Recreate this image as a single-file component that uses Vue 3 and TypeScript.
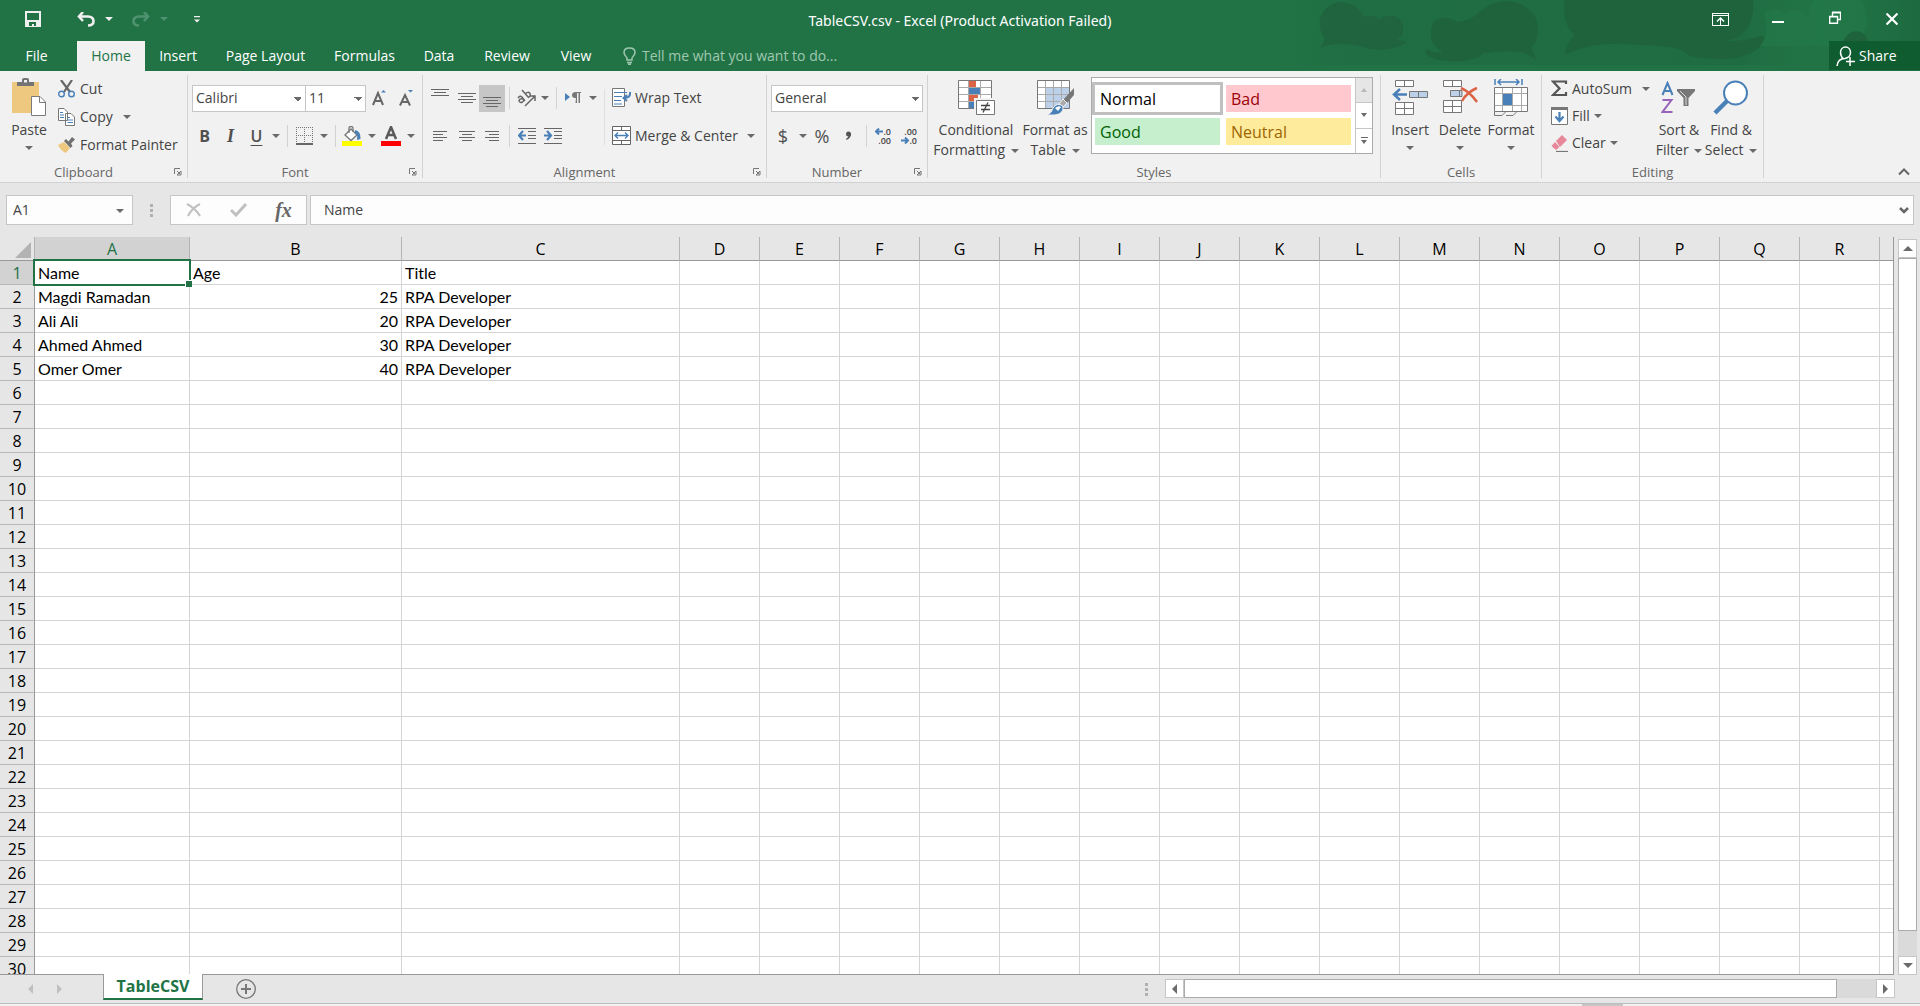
<script setup lang="ts">
import { ref } from 'vue'

interface Person {
  name: string
  age: string
  title: string
}

const tabs: { label: string; width: string }[] = [
  { label: 'Insert', width: 'w66' },
  { label: 'Page Layout', width: 'w109' },
  { label: 'Formulas', width: 'w89' },
  { label: 'Data', width: 'w60' },
  { label: 'Review', width: 'w76' },
  { label: 'View', width: 'w62' },
]

const columns: string[] = 'ABCDEFGHIJKLMNOPQR'.split('')

const people: Person[] = [
  { name: 'Name', age: 'Age', title: 'Title' },
  { name: 'Magdi Ramadan', age: '25', title: 'RPA Developer' },
  { name: 'Ali Ali', age: '20', title: 'RPA Developer' },
  { name: 'Ahmed Ahmed', age: '30', title: 'RPA Developer' },
  { name: 'Omer Omer', age: '40', title: 'RPA Developer' },
]

const rowCount = 30
const nameBox = ref('A1')
const formula = ref('Name')

function cell(row: number, col: number): string {
  const person = people[row - 1]
  if (!person) return ''
  return [person.name, person.age, person.title][col] ?? ''
}
</script>

<template>
  <div class="app">
    <header class="top">
      <svg class="clouds" width="640" height="71" viewBox="0 0 640 71" aria-hidden="true">
        <defs>
          <linearGradient id="haze" x1="0" x2="1" y1="0" y2="0">
            <stop offset="0" stop-color="#1f6a42" stop-opacity="0" />
            <stop offset="0.12" stop-color="#1f6a42" stop-opacity="0.6" />
            <stop offset="0.72" stop-color="#1f6a41" stop-opacity="0.8" />
            <stop offset="0.84" stop-color="#217346" stop-opacity="0.3" />
            <stop offset="1" stop-color="#1d6840" stop-opacity="0.9" />
          </linearGradient>
        </defs>
        <rect width="640" height="65" fill="url(#haze)" />
        <path d="M40 48C44 42 46 40 42 34C34 16 48 2 62 2C74 3 81 10 83 17C92 14 97 17 99 20C108 12 122 16 123 26C124 34 121 38 117 40C124 41 128 41 127 42C118 50 92 52 84 47C70 43 52 43 40 48Z" fill="#1f643e" />
        <path d="M152 26C154 18 166 16 174 20C178 24 182 20 186 20C198 18 204 1 228 1C248 3 258 16 258 28C258 40 254 46 251 48L257 60C250 56 244 52 238 52C224 50 214 53 204 53C196 62 166 65 148 56C145 52 146 50 147 49C150 52 160 53 163 52C150 46 150 34 152 26Z" fill="#1f633c" />
        <path d="M284 0H473C476 24 462 40 444 41C462 42 474 38 480 36C488 35 484 45 476 50C460 62 430 60 410 56C396 44 376 46 356 45C330 42 306 44 285 55C286 44 292 40 294 34C284 26 284 14 284 0Z" fill="#1f633c" />
        <path d="M484 14C488 8 500 8 504 14C512 8 524 10 528 18C528 10 530 4 534 0H582C592 20 586 36 572 46H480C488 36 488 24 484 14Z" fill="#237949" opacity="0.6" />
        <path d="M563 41C570 28 584 28 588 41Z" fill="#1f633c" />
      </svg>

      <div class="titlebar">
        <div class="qat">
          <button class="qbtn save" aria-label="Save">
            <svg width="16" height="16" viewBox="0 0 16 16"><path fill="#f0f0f0" fill-rule="evenodd" d="M0 0H16V16H0ZM2 2V9H14V2ZM4 11V15H7V13H9V15H11V11Z" /></svg>
          </button>
          <button class="qbtn undo" aria-label="Undo">
            <svg width="18" height="15" viewBox="0 0 18 15"><path d="M6 0L2 4.500L6 9M2 4.500H11C15 4.500 16.500 7 16.500 9C16.500 12 14 13.500 11 13.500" fill="none" stroke="#f0f0f0" stroke-width="2.600" /></svg>
          </button>
          <button class="qbtn q-arrow" aria-label="Undo history"><span class="caret light"></span></button>
          <button class="qbtn redo" aria-label="Redo">
            <svg width="18" height="15" viewBox="0 0 18 15"><path d="M12 0L16 4.500L12 9M16 4.500H7C3 4.500 1.500 7 1.500 9C1.500 12 4 13.500 7 13.500" fill="none" stroke="#4f9270" stroke-width="2.600" /></svg>
          </button>
          <button class="qbtn q-arrow" aria-label="Redo history"><span class="caret dim"></span></button>
          <button class="qbtn q-more" aria-label="Customize Quick Access Toolbar">
            <svg width="6" height="7" viewBox="0 0 6 7"><path d="M0 0H6V1.200H0ZM0 3.500H6L3 6.500Z" fill="#f0f0f0" /></svg>
          </button>
        </div>
        <div class="title">TableCSV.csv - Excel (Product Activation Failed)</div>
        <div class="caption">
          <button aria-label="Ribbon Display Options">
            <svg width="17" height="13" viewBox="0 0 17 13" shape-rendering="crispEdges"><path d="M0.500 0.500H16.500V12.500H0.500ZM0.500 2.500H16.500M8.500 5V12" fill="none" stroke="#fff" /><path d="M5 8.500L8.500 5L12 8.500" fill="none" stroke="#fff" stroke-width="1.500" shape-rendering="auto" /></svg>
          </button>
          <button aria-label="Minimize">
            <svg width="12" height="12" viewBox="0 0 12 12"><path d="M0 8H12V10H0Z" fill="#fff" /></svg>
          </button>
          <button aria-label="Restore">
            <svg width="12" height="16" viewBox="0 0 12 16"><path d="M0.700 5.700H8.500V12.300H0.700ZM3.500 5V1.700H11.500V8.500H9M0 5.500H9M3 1.300H12" fill="none" stroke="#fff" stroke-width="1.400" /></svg>
          </button>
          <button aria-label="Close">
            <svg width="12" height="12" viewBox="0 0 12 12"><path d="M0.500 0.500L11.500 11.500M11.500 0.500L0.500 11.500" stroke="#fff" stroke-width="2.200" /></svg>
          </button>
        </div>
      </div>

      <nav class="tabs">
        <button class="tab file">File</button>
        <button class="tab home">Home</button>
        <button v-for="t in tabs" :key="t.label" class="tab" :class="t.width">{{ t.label }}</button>
        <label class="tellme">
          <svg width="13" height="18" viewBox="0 0 13 18"><path d="M4 13V11C3 9 1 8 1 5.500C1 3 3 1 6.500 1C10 1 12 3 12 5.500C12 8 10 9 9 11V13ZM4 15.500H9M5 17.300H8" fill="none" stroke="#a0c8b0" stroke-width="1.500" /></svg>
          <input type="text" placeholder="Tell me what you want to do..." aria-label="Tell me what you want to do" />
        </label>
        <button class="share">
          <svg width="20" height="20" viewBox="0 0 20 20"><path d="M1 20C1.500 15 4 12.500 9 12.500C12 12 14.500 9.500 14.500 6.500C14.500 3.500 12.500 1 9.500 1C6.500 1 4.500 3.500 4.500 6.500C4.500 9.500 6 11.500 7.500 12.800M14 11V20M10 15.500H19" fill="none" stroke="#fff" stroke-width="1.500" /></svg>
          Share
        </button>
      </nav>
    </header>

    <section class="ribbon">
      <div class="group g-clip">
        <div class="body clip">
          <button class="big paste">
            <span class="pic"><svg width="36" height="40" viewBox="0 0 36 40"><path d="M1 4H28V35H1Z" fill="#edc87e" /><path d="M6 8V4H11V1.500Q11 0 13 0H16Q18 0 18 1.500V4H23V8Z" fill="#737373" /><path d="M13 2H16V4.500H13Z" fill="#f1f1f1" /><path d="M20.500 18.500H29L34.500 24V37.500H20.500Z" fill="#fff" stroke="#7b7b7b" /><path d="M28.500 18.500V24.500H34.500" fill="none" stroke="#7b7b7b" /></svg></span>
            <span>Paste</span>
            <span class="drop"><span class="caret"></span></span>
          </button>
          <div class="stack">
            <button class="cmd">
              <svg width="18" height="18" viewBox="0 0 18 18"><path d="M3 0L12 12M14 0L6 12" stroke="#666" stroke-width="2.200" /><circle cx="3.500" cy="14" r="2.800" fill="none" stroke="#4a80b8" stroke-width="1.400" /><circle cx="13.500" cy="14" r="2.800" fill="none" stroke="#4a80b8" stroke-width="1.400" /></svg>
              Cut
            </button>
            <button class="cmd">
              <svg width="18" height="18" viewBox="0 0 18 18"><path d="M0.500 0.500H6L9.500 4V12.500H0.500ZM7.500 5.500H13L16.500 9V17.500H7.500Z" fill="#fff" stroke="#777" /><path d="M2 4.500H5M2 7H6M2 9.500H6M9.500 9.500H12M9.500 12H15M9.500 14.500H15" stroke="#4a80b8" /></svg>
              Copy <span class="caret far"></span>
            </button>
            <button class="cmd">
              <svg width="18" height="18" viewBox="0 0 18 18"><path d="M0 9L6 6L12 12L8 17Q3 15 0 9Z" fill="#edc87e" /><path d="M6 5L8 3L10.500 5.500L14 1L17 3.500L13 7.500L14.500 10L12.500 12Z" fill="#707070" /></svg>
              Format Painter
            </button>
          </div>
        </div>
        <div class="foot"><span>Clipboard</span><button class="launch" aria-label="Clipboard settings"><svg width="8" height="8" viewBox="0 0 8 8"><path d="M0.500 6V0.500H6M3 3L6 6M7 3V7H3Z" fill="none" stroke="#777" /></svg></button></div>
      </div>

      <div class="group g-font">
        <div class="body rows">
          <div class="row font-top">
            <select class="combo" aria-label="Font"><option>Calibri</option></select>
            <select class="combo size" aria-label="Font size"><option>11</option></select>
            <button class="ic" aria-label="Increase font size"><svg width="16" height="18" viewBox="0 0 16 18"><path d="M1 16L6 4L11 16M3 12H9" fill="none" stroke="#666" stroke-width="2" /><path d="M9 3.500L11.500 1L14 3.500Z" fill="#4a80b8" /></svg></button>
            <button class="ic" aria-label="Decrease font size"><svg width="16" height="18" viewBox="0 0 16 18"><path d="M1 16.500L6 6L11 16.500M3 13H9" fill="none" stroke="#666" stroke-width="2" /><path d="M9 1L11.500 3.500L14 1Z" fill="#4a80b8" /></svg></button>
          </div>
          <div class="row font-bottom">
            <button class="ic glyph b" aria-label="Bold">B</button>
            <button class="ic glyph i" aria-label="Italic">I</button>
            <button class="ic glyph u" aria-label="Underline">U</button>
            <button class="ic" aria-label="Underline styles"><span class="caret"></span></button>
            <span class="sep"></span>
            <button class="ic" aria-label="Borders"><svg width="17" height="18" viewBox="0 0 17 18" shape-rendering="crispEdges"><path d="M0 0.500H17M0.500 2V16M8.500 2V16M16.500 2V16M0 8.500H17" stroke="#777" stroke-dasharray="1 1" /><path d="M0 17H17" stroke="#666" stroke-width="1.500" /></svg></button>
            <button class="ic" aria-label="Border styles"><span class="caret"></span></button>
            <span class="sep"></span>
            <button class="ic" aria-label="Fill color"><svg width="20" height="20" viewBox="0 0 20 20"><path d="M0 15H20V20H0Z" fill="#ff0" /><path d="M9 3L15 9L9 14.500L3 9Z" fill="#fff" stroke="#777" stroke-width="1.300" /><path d="M7 7V2Q7 0.500 9 0.500Q11 0.500 11 2V6" fill="none" stroke="#777" stroke-width="1.300" /><path d="M13 4Q19 5 18.500 13L15 14Q16 8 13 7Z" fill="#4a80b8" /></svg></button>
            <button class="ic" aria-label="Fill colors"><span class="caret"></span></button>
            <button class="ic" aria-label="Font color"><svg width="20" height="20" viewBox="0 0 20 20"><path d="M0 15H20V20H0Z" fill="#f00" /><path d="M5 13L10 1L15 13M7 9H13" fill="none" stroke="#5a5a5a" stroke-width="2.500" /></svg></button>
            <button class="ic" aria-label="Font colors"><span class="caret"></span></button>
          </div>
        </div>
        <div class="foot"><span>Font</span><button class="launch" aria-label="Font settings"><svg width="8" height="8" viewBox="0 0 8 8"><path d="M0.500 6V0.500H6M3 3L6 6M7 3V7H3Z" fill="none" stroke="#777" /></svg></button></div>
      </div>

      <div class="group g-align">
        <div class="body align">
          <div class="rows">
            <div class="row align-top">
              <button class="ic" aria-label="Top align"><svg width="18" height="18" viewBox="0 0 18 18" shape-rendering="crispEdges"><path d="M0 0.500H18M3 3.500H15M0 6.500H18" stroke="#666" /></svg></button>
              <button class="ic" aria-label="Middle align"><svg width="18" height="18" viewBox="0 0 18 18" shape-rendering="crispEdges"><path d="M0 4.500H18M3 7.500H15M0 10.500H18M3 13.500H15" stroke="#666" /></svg></button>
              <button class="ic on" aria-label="Bottom align"><svg width="18" height="18" viewBox="0 0 18 18" shape-rendering="crispEdges"><path d="M0 8.500H18M3 11.500H15M0 14.500H18M3 17.500H15" stroke="#666" /></svg></button>
              <span class="sep"></span>
              <button class="ic" aria-label="Orientation"><svg width="19" height="18" viewBox="0 0 19 18"><g fill="none" stroke="#666" stroke-width="1.500"><path d="M1 9Q3 6 5 8L8 12M6 10Q3 9 2 11.500Q3 14.500 5.500 13Q7.500 11.500 6 10" /><path d="M5 1L12 9M8 5Q11 2 13 4.500Q14 8 11 8" /><path d="M8 17L18 7M13 7H18V12" /></g></svg></button>
              <button class="ic" aria-label="Orientation options"><span class="caret"></span></button>
              <span class="sep"></span>
              <button class="ic" aria-label="Text direction"><svg width="17" height="12" viewBox="0 0 17 12"><path d="M0 1L5 5L0 9Z" fill="#4a80b8" /><path d="M11 6Q7 6 7 3.200Q7 0 11 0H16V1H15V11H13.500V1H12V11H10.500Z" fill="#777" /></svg></button>
              <button class="ic" aria-label="Text direction options"><span class="caret"></span></button>
            </div>
            <div class="row align-bottom">
              <button class="ic" aria-label="Align left"><svg width="16" height="12" viewBox="0 0 16 12" shape-rendering="crispEdges"><path d="M1 1.500H15M1 4.500H11M1 7.500H15M1 10.500H11" stroke="#666" /></svg></button>
              <button class="ic" aria-label="Center"><svg width="16" height="12" viewBox="0 0 16 12" shape-rendering="crispEdges"><path d="M0 1.500H16M3 4.500H13M0 7.500H16M3 10.500H13" stroke="#666" /></svg></button>
              <button class="ic" aria-label="Align right"><svg width="16" height="12" viewBox="0 0 16 12" shape-rendering="crispEdges"><path d="M1 1.500H15M5 4.500H15M1 7.500H15M5 10.500H15" stroke="#666" /></svg></button>
              <span class="sep"></span>
              <button class="ic" aria-label="Decrease indent"><svg width="18" height="17" viewBox="0 0 18 17"><path d="M0 1H18M10 4.500H18M10 8H18M10 11.500H18M0 16H18" stroke="#666" shape-rendering="crispEdges" /><path d="M5 4L1 8.500L5 13M1 8.500H8" fill="none" stroke="#4a80b8" stroke-width="2.200" /></svg></button>
              <button class="ic" aria-label="Increase indent"><svg width="18" height="17" viewBox="0 0 18 17"><path d="M0 1H18M10 4.500H18M10 8H18M10 11.500H18M0 16H18" stroke="#666" shape-rendering="crispEdges" /><path d="M3 4L7 8.500L3 13M0 8.500H7" fill="none" stroke="#4a80b8" stroke-width="2.200" /></svg></button>
            </div>
          </div>
          <span class="tall"></span>
          <div class="rows">
            <button class="row cmd wide">
              <svg width="20" height="20" viewBox="0 0 20 20"><path d="M0.500 0.500H12.500V18.500H0.500Z" fill="#fff" stroke="#777" /><path d="M2 4.500H15M2 8.500H10M2 12.500H9M2 16H10" stroke="#4a80b8" /><path d="M18 4Q19 10 12 10M15 7L11.500 10L15 13" fill="none" stroke="#4a80b8" stroke-width="2" /></svg>
              Wrap Text
            </button>
            <button class="row cmd wide">
              <svg width="20" height="20" viewBox="0 0 20 20"><path d="M0.500 0.500H18.500V18.500H0.500ZM0.500 4.500H18.500M0.500 14.500H18.500M9.500 0.500V4.500M9.500 14.500V18.500" fill="#fff" stroke="#666" /><path d="M3 9.500H16M6 6.500L3 9.500L6 12.500M13 6.500L16 9.500L13 12.500" fill="none" stroke="#4a80b8" stroke-width="1.400" /></svg>
              Merge &amp; Center <span class="caret far"></span>
            </button>
          </div>
        </div>
        <div class="foot"><span>Alignment</span><button class="launch" aria-label="Alignment settings"><svg width="8" height="8" viewBox="0 0 8 8"><path d="M0.500 6V0.500H6M3 3L6 6M7 3V7H3Z" fill="none" stroke="#777" /></svg></button></div>
      </div>

      <div class="group g-num">
        <div class="body rows">
          <div class="row num-top">
            <select class="combo" aria-label="Number format"><option>General</option></select>
          </div>
          <div class="row num-bottom">
            <button class="ic glyph big-glyph" aria-label="Accounting format">$</button>
            <button class="ic" aria-label="Currency options"><span class="caret"></span></button>
            <button class="ic glyph big-glyph" aria-label="Percent style">%</button>
            <button class="ic" aria-label="Comma style"><svg width="7" height="10" viewBox="0 0 7 10"><circle cx="3.500" cy="3" r="2.500" fill="#555" /><path d="M6 2Q6.500 7 1.500 9L1 8Q4 6 3.500 4Z" fill="#555" /></svg></button>
            <span class="sep"></span>
            <button class="ic decimals" aria-label="Increase decimal"><span><svg width="8" height="7" viewBox="0 0 8 7"><path d="M4 0.500L1 3.500L4 6.500M1 3.500H8" fill="none" stroke="#4a80b8" stroke-width="2" /></svg>.0</span><span>.00</span></button>
            <button class="ic decimals" aria-label="Decrease decimal"><span>.00</span><span><svg width="8" height="7" viewBox="0 0 8 7"><path d="M4 0.500L7 3.500L4 6.500M7 3.500H0" fill="none" stroke="#4a80b8" stroke-width="2" /></svg>.0</span></button>
          </div>
        </div>
        <div class="foot"><span>Number</span><button class="launch" aria-label="Number settings"><svg width="8" height="8" viewBox="0 0 8 8"><path d="M0.500 6V0.500H6M3 3L6 6M7 3V7H3Z" fill="none" stroke="#777" /></svg></button></div>
      </div>

      <div class="group g-styles">
        <div class="body">
          <button class="big cond">
            <span class="pic"><svg width="37" height="36" viewBox="0 0 37 36"><path d="M0.500 0.500H33.500V28.500H0.500Z" fill="#fff" /><path d="M10.500 0.500H18V7H10.500ZM10.500 14H20V21H10.500Z" fill="#dc6346" /><path d="M10.500 7H22V14H10.500ZM10.500 21H16V28H10.500Z" fill="#4a80b8" /><path d="M0.500 7.500H33.500M0.500 14.500H33.500M0.500 21.500H33.500M10.500 0.500V28M22.500 0.500V28" stroke="#aaa" fill="none" /><path d="M0.500 0.500H33.500V28.500H0.500Z" fill="none" stroke="#777" /><path d="M16 18H37V36H16Z" fill="#f1f1f1" /><path d="M18.500 20.500H36.500V34.500H18.500Z" fill="#fff" stroke="#777" /><path d="M23 25.500H32M23 29.500H32M30 22.500L25 32.500" stroke="#444" stroke-width="1.300" /></svg></span>
            <span>Conditional</span>
            <span>Formatting <span class="caret"></span></span>
          </button>
          <button class="big fmt-table">
            <span class="pic"><svg width="37" height="36" viewBox="0 0 37 36"><path d="M0.500 0.500H32.500V28.500H0.500Z" fill="#fff" /><path d="M8.500 7.500H32.500V28.500H8.500Z" fill="#bdd0e9" /><path d="M0.500 7.500H32.500M0.500 14.500H32.500M0.500 21.500H32.500M8.500 0.500V28M16.500 0.500V28M24.500 0.500V28" stroke="#aaa" fill="none" /><path d="M0.500 0.500H32.500V28.500H0.500Z" fill="none" stroke="#777" /><path d="M37 8V15L30 23L26 20Z" fill="#777" /><path d="M26 19L30 23L26 27L22 24Z" fill="#aaa" stroke="#f1f1f1" /><path d="M10 35Q15 33 16 28Q20 22 26 26Q27 34 18 35Z" fill="#4a80b8" stroke="#f1f1f1" /><path d="M18 28Q22 25 24 27L21 31Z" fill="#fff" /></svg></span>
            <span>Format as</span>
            <span>Table <span class="caret"></span></span>
          </button>
          <div class="gallery">
            <div class="swatches">
              <button class="swatch normal">Normal</button>
              <button class="swatch bad">Bad</button>
              <button class="swatch good">Good</button>
              <button class="swatch neutral">Neutral</button>
            </div>
            <div class="scroller">
              <button class="off" aria-label="Previous styles"><span class="caret up"></span></button>
              <button aria-label="Next styles"><span class="caret"></span></button>
              <button aria-label="More styles"><span class="more-line"></span><span class="caret"></span></button>
            </div>
          </div>
        </div>
        <div class="foot"><span>Styles</span></div>
      </div>

      <div class="group g-cells">
        <div class="body">
          <button class="big ins">
            <span class="pic"><svg width="37" height="36" viewBox="0 0 37 36"><path d="M3.500 0.500H21.500V6.500H3.500ZM12.500 0.500V6.500M3.500 22.500H21.500V34.500H3.500ZM12.500 22.500V34.500M3.500 28.500H21.500" fill="#fff" stroke="#777" /><path d="M17.500 11.500H35.500V17.500H17.500ZM26.500 11.500V17.500" fill="#bdd0e9" stroke="#777" /><path d="M8 9L2 14.500L8 20M2 14.500H15" fill="none" stroke="#4a80b8" stroke-width="2.500" /></svg></span>
            <span>Insert</span>
            <span class="drop"><span class="caret"></span></span>
          </button>
          <button class="big del">
            <span class="pic"><svg width="37" height="36" viewBox="0 0 37 36"><path d="M1.500 0.500H19.500V6.500H1.500ZM10.500 0.500V6.500M1.500 20.500H19.500V32.500H1.500ZM10.500 20.500V32.500M1.500 26.500H19.500" fill="#fff" stroke="#777" /><path d="M8.500 10.500H20V16.500H8.500ZM17.500 10.500V16.500" fill="#bdd0e9" stroke="#777" /><path d="M19 8Q28 12 35 22M35 8Q25 12 20 21" fill="none" stroke="#dc6346" stroke-width="2.500" /></svg></span>
            <span>Delete</span>
            <span class="drop"><span class="caret"></span></span>
          </button>
          <button class="big fmt">
            <span class="pic"><svg width="35" height="37" viewBox="0 0 35 37"><path d="M1 0V6M28 0V6M4 3H25M7 0L4 3L7 6M22 0L25 3L22 6" fill="none" stroke="#4a80b8" stroke-width="1.500" /><path d="M0.500 8.500H33.500V32.500H0.500Z" fill="#fff" /><path d="M8.500 8.500V32M18.500 8.500V32M27.500 8.500V32M0.500 14.500H33M0.500 26.500H33" stroke="#aaa" /><path d="M9 15H18V26H9Z" fill="#4a80b8" /><path d="M0.500 8.500H33.500V32.500H0.500ZM0.500 32.500V36.500H8L12 32.500M12 36.500H19L23 32.500" fill="none" stroke="#777" /></svg></span>
            <span>Format</span>
            <span class="drop"><span class="caret"></span></span>
          </button>
        </div>
        <div class="foot"><span>Cells</span></div>
      </div>

      <div class="group g-edit">
        <div class="body">
          <div class="stack edits">
            <button class="cmd">
              <svg width="17" height="17" viewBox="0 0 17 17"><path d="M15 4V1.500H2L8.500 8.500L2 15H15V12" fill="none" stroke="#555" stroke-width="2.200" /></svg>
              AutoSum <span class="caret far"></span>
            </button>
            <button class="cmd">
              <svg width="17" height="18" viewBox="0 0 17 18"><path d="M0.500 0.500H16.500V17.500H0.500Z" fill="#fff" stroke="#777" /><path d="M0 0H17V3H0Z" fill="#777" /><path d="M8.500 5V13M4.500 9.500L8.500 14L12.500 9.500" fill="none" stroke="#4a80b8" stroke-width="2.200" /></svg>
              Fill <span class="caret"></span>
            </button>
            <button class="cmd">
              <svg width="17" height="18" viewBox="0 0 17 18"><path d="M5 7L11 1L16 6L9 13Z" fill="#e8879a" /><path d="M4 8L8.500 13L5 16L0.500 12Z" fill="#e8879a" /><path d="M5 17.500H17" stroke="#777" stroke-width="1.200" /></svg>
              Clear <span class="caret"></span>
            </button>
          </div>
          <button class="big sort">
            <span class="pic"><svg width="36" height="34" viewBox="0 0 36 34"><path d="M1.500 14L6.500 2L11.500 14M3 10H10" fill="none" stroke="#4a80b8" stroke-width="2" /><path d="M1.500 19H10.500L1.500 31H11.500" fill="none" stroke="#9863b8" stroke-width="2" /><path d="M16 8H34V10L27.500 17V25H22.500V17L16 10Z" fill="#777" /><path d="M19 10L25 16V24" stroke="#ddd" fill="none" /></svg></span>
            <span>Sort &amp;</span>
            <span>Filter <span class="caret"></span></span>
          </button>
          <button class="big find">
            <span class="pic"><svg width="36" height="35" viewBox="0 0 36 35"><path d="M15 20L2 33" stroke="#4a80b8" stroke-width="4.500" /><circle cx="22.500" cy="13" r="11.500" fill="#fff" stroke="#4a80b8" stroke-width="2" /></svg></span>
            <span>Find &amp;</span>
            <span>Select <span class="caret"></span></span>
          </button>
        </div>
        <div class="foot"><span>Editing</span></div>
      </div>
      <button class="collapse" aria-label="Collapse the Ribbon">
        <svg width="12" height="8" viewBox="0 0 12 8"><path d="M1 6.500L6 1.500L11 6.500" fill="none" stroke="#666" stroke-width="2" /></svg>
      </button>
    </section>

    <section class="formula-bar">
      <div class="box name-box">
        <input v-model="nameBox" type="text" aria-label="Name Box" />
        <button aria-label="Name list"><span class="caret"></span></button>
      </div>
      <span class="grip"><i></i><i></i><i></i></span>
      <div class="box fx">
        <button aria-label="Cancel"><svg width="16" height="14" viewBox="0 0 16 14"><path d="M1 1Q9 5 14 13M14 1Q6 5 2 13" fill="none" stroke="#c0c0c0" stroke-width="2" /></svg></button>
        <button aria-label="Enter"><svg width="17" height="14" viewBox="0 0 17 14"><path d="M1 7L6 12L16 1" fill="none" stroke="#c0c0c0" stroke-width="3" /></svg></button>
        <button class="fx-btn" aria-label="Insert Function">fx</button>
      </div>
      <div class="box formula">
        <input v-model="formula" type="text" aria-label="Formula" />
        <button aria-label="Expand Formula Bar"><svg width="10" height="7" viewBox="0 0 10 7"><path d="M1 1L5 5L9 1" fill="none" stroke="#666" stroke-width="2.500" /></svg></button>
      </div>
    </section>

    <main class="sheet-area">
      <div class="grid">
        <table>
          <colgroup>
            <col class="c-head" /><col class="c-a" /><col class="c-b" /><col class="c-c" />
            <col v-for="n in 15" :key="n" class="c-std" />
            <col />
          </colgroup>
          <thead>
            <tr>
              <th class="corner" aria-label="Select all"><svg width="16" height="16" viewBox="0 0 16 16"><path d="M16 0V16H0Z" fill="#b3b3b3" /></svg></th>
              <th v-for="c in columns" :key="c" scope="col" :class="{ picked: c === 'A' }">{{ c }}</th>
              <th></th>
            </tr>
          </thead>
          <tbody>
            <tr v-for="r in rowCount" :key="r">
              <th scope="row" :class="{ picked: r === 1 }">{{ r }}</th>
              <td
                v-for="(c, i) in columns"
                :key="c"
                :class="{ num: i === 1 && r > 1, active: i === 0 && r === 1 }"
              >{{ cell(r, i) }}</td>
              <td></td>
            </tr>
          </tbody>
        </table>
      </div>
      <div class="vscroll">
        <button aria-label="Scroll up"><span class="caret up dark"></span></button>
        <div class="track"><div class="thumb"></div></div>
        <button aria-label="Scroll down"><span class="caret dark"></span></button>
      </div>
    </main>

    <footer class="sheet-bar">
      <div class="sheet-nav">
        <button aria-label="Previous sheet"><span class="side left pale"></span></button>
        <button aria-label="Next sheet"><span class="side right pale"></span></button>
      </div>
      <button class="sheet-tab">TableCSV</button>
      <button class="add" aria-label="New sheet"><svg width="22" height="22" viewBox="0 0 22 22"><circle cx="11" cy="11" r="9.300" fill="none" stroke="#777" stroke-width="1.300" /><path d="M11 6V16M6 11H16" stroke="#777" stroke-width="2" /></svg></button>
      <span class="grip"><i></i><i></i><i></i></span>
      <div class="hscroll">
        <button aria-label="Scroll left"><span class="side left"></span></button>
        <div class="track"><div class="thumb"></div></div>
        <button aria-label="Scroll right"><span class="side right"></span></button>
      </div>
    </footer>
    <div class="status"><span></span></div>
  </div>
</template>

<style>
body {
  margin: 0;
  overflow: hidden;
}
</style>

<style scoped>
.app {
  display: flex;
  flex-direction: column;
  height: 100vh;
  background: #e6e6e6;
  color: #444;
  font-family: 'Open Sans', 'Noto Sans', sans-serif;
  font-size: 14px;
  line-height: 20px;
}
.app * {
  box-sizing: border-box;
}
button,
input,
select {
  margin: 0;
  padding: 0;
  border: 0;
  border-radius: 0;
  background: transparent;
  color: inherit;
  font: inherit;
  outline: none;
  appearance: none;
}
svg {
  display: block;
  flex: none;
}

/* carets */
.caret {
  display: inline-block;
  width: 0;
  height: 0;
  border: solid transparent;
  border-width: 4px 4px 0;
  border-top-color: #6a6a6a;
  vertical-align: middle;
}
.caret.light { border-top-color: #f0f0f0; }
.caret.dim { border-top-color: #4f9270; }
.caret.far { margin-left: 6px; }
.caret.up {
  border-width: 0 4px 4px;
  border-bottom-color: #b8b8b8;
}
.caret.dark { border-width: 5px 5px 0; }
.caret.up.dark {
  border-width: 0 5px 5px;
  border-bottom-color: #6a6a6a;
}
.side {
  display: block;
  border: solid transparent;
}
.side.left {
  border-width: 5px 5px 5px 0;
  border-right-color: #6a6a6a;
}
.side.right {
  border-width: 5px 0 5px 5px;
  border-left-color: #6a6a6a;
}
.side.left.pale { border-right-color: #c0c0c0; }
.side.right.pale { border-left-color: #c0c0c0; }

/* title bar and tabs */
.top {
  position: relative;
  flex: none;
  background: #217346;
  color: #fff;
}
.clouds {
  position: absolute;
  top: 0;
  right: 0;
}
.titlebar {
  position: relative;
  display: grid;
  grid-template-columns: 1fr auto 1fr;
  height: 41px;
}
.qat {
  display: flex;
  align-items: center;
  height: 38px;
  padding-left: 20px;
}
.qbtn {
  display: flex;
  align-items: center;
  justify-content: center;
  height: 30px;
}
.save { width: 26px; margin-right: 26px; }
.undo { width: 28px; }
.redo { width: 28px; margin-left: 9px; }
.q-arrow { width: 18px; }
.q-more { width: 24px; margin-left: 12px; }
.title {
  font-family: 'Noto Sans', sans-serif;
  line-height: 41px;
}
.caption {
  display: flex;
  justify-content: flex-end;
}
.caption button {
  display: flex;
  align-items: center;
  justify-content: center;
  width: 57px;
  height: 38px;
}
.tabs {
  position: relative;
  display: flex;
  height: 30px;
}
.tab {
  width: 66px;
  text-align: center;
  line-height: 30px;
}
.tab.file { width: 73px; margin-right: 4px; }
.tab.home {
  width: 68px;
  background: #f1f1f1;
  color: #217346;
}
.tab.w109 { width: 109px; }
.tab.w89 { width: 89px; }
.tab.w60 { width: 60px; }
.tab.w76 { width: 76px; }
.tab.w62 { width: 62px; }
.tellme {
  display: flex;
  align-items: center;
  gap: 6px;
  margin-left: 16px;
}
.tellme input { width: 240px; }
.tellme input::placeholder {
  color: #a0c8b0;
  opacity: 1;
}
.share {
  display: flex;
  align-items: center;
  gap: 3px;
  width: 91px;
  height: 29px;
  margin-left: auto;
  padding-left: 7px;
  background: #0e5c2f;
}

/* ribbon */
.ribbon {
  display: flex;
  flex: none;
  height: 112px;
  padding-top: 4px;
  border-bottom: 1px solid #d2d2d2;
  background: #f1f1f1;
}
.group {
  display: flex;
  flex: none;
  flex-direction: column;
  height: 103px;
  border-right: 1px solid #d2d2d2;
}
.g-clip { width: 188px; }
.g-font { width: 235px; }
.g-align { width: 344px; }
.g-num { width: 161px; }
.g-styles { width: 453px; }
.g-cells { width: 161px; }
.g-edit { width: 222px; }
.body {
  display: flex;
  flex: 1;
}
.foot {
  display: flex;
  align-items: center;
  height: 20px;
  margin-bottom: -4px;
  color: #666;
  font-size: 13px;
}
.foot span {
  flex: 1;
  text-align: center;
}
.launch { padding: 2px 5px 2px 7px; }
.rows {
  display: flex;
  flex-direction: column;
  padding-top: 4px;
}
.body.rows { padding-left: 4px; }
.row { height: 38px; }
.row + .row { height: 37px; }
.ic {
  display: flex;
  align-items: center;
  justify-content: center;
  height: 35px;
}
.sep {
  justify-self: center;
  width: 1px;
  height: 22px;
  background: #d2d2d2;
}
.big {
  display: flex;
  flex-direction: column;
  align-items: center;
  white-space: nowrap;
}
.pic {
  display: flex;
  align-items: center;
  height: 45px;
}
.big .caret { margin-left: 2px; }
.big .drop .caret { margin: 0; }
.drop {
  height: 18px;
  line-height: 14px;
}
.stack {
  display: flex;
  flex-direction: column;
}
.cmd {
  display: flex;
  align-items: center;
  gap: 4px;
  height: 28px;
  white-space: nowrap;
}
.paste { width: 58px; }
.edits { width: 114px; padding-left: 9px; }
.edits .cmd { height: 27px; }
.font-top {
  display: grid;
  grid-template-columns: 114px 60px 28px 25px;
  align-items: center;
}
.font-bottom {
  display: grid;
  grid-template-columns: 25px 27px 25px 14px 8px 26px 14px 8px 26px 13px 26px 14px;
  align-items: center;
}
.combo {
  height: 27px;
  padding-left: 3px;
  border: 1px solid #c6c6c6;
  background:
    conic-gradient(from 315deg at 50% 100%, #6a6a6a 90deg, transparent 90deg) right 3px top 11px / 8px 4px no-repeat,
    #fff;
}
.combo.size { border-left: 0; }
.glyph {
  color: #505050;
  font-size: 16px;
}
.b { font-weight: 700; }
.i {
  font-family: 'Liberation Serif', serif;
  font-size: 18px;
  font-style: italic;
  font-weight: 700;
}
.u {
  font-weight: 600;
  text-decoration: underline;
  text-underline-offset: 3px;
}
.big-glyph { font-size: 18px; }
.align {
  align-items: flex-start;
  padding-left: 3px;
}
.align-top {
  display: grid;
  grid-template-columns: 28px 25px 26px 8px 26px 12px 10px 24px 16px;
  align-items: center;
}
.align-bottom {
  display: grid;
  grid-template-columns: 28px 25px 26px 8px 28px 24px;
  align-items: center;
}
.on {
  height: 27px;
  background: #c6c6c6;
}
.tall {
  width: 1px;
  height: 56px;
  margin: 14px 7px 0 3px;
  background: #e0e0e0;
}
.row.wide {
  gap: 3px;
  height: 38px;
}
.num-top {
  display: grid;
  grid-template-columns: 152px;
  align-items: center;
}
.num-bottom {
  display: grid;
  grid-template-columns: 24px 16px 22px 30px 6px 26px 26px;
  align-items: center;
}
.decimals {
  flex-direction: column;
  align-items: flex-end;
  padding-right: 4px;
  font-size: 9px;
  font-weight: 600;
  line-height: 9px;
}
.decimals span {
  display: flex;
  align-items: center;
}
.cond { width: 96px; }
.fmt-table { width: 62px; }
.gallery {
  display: flex;
  width: 282px;
  height: 77px;
  margin: 2px 0 0 5px;
  border: 1px solid #ababab;
  background: #fff;
}
.swatches {
  display: grid;
  flex: 1;
  grid-template-columns: 131px 131px;
  grid-template-rows: 33px 33px;
  padding-top: 4px;
}
.swatch {
  padding-left: 5px;
  border: 3px solid #fff;
  font-size: 16px;
  text-align: left;
}
.normal { border-color: #c0c0c0; color: #000; }
.good { background: #c6efce; color: #006100; }
.bad { background: #ffc7ce; color: #9c0006; }
.neutral { background: #ffeb9c; color: #9c6500; }
.scroller {
  display: flex;
  flex-direction: column;
  width: 17px;
  border-left: 1px solid #c6c6c6;
}
.scroller button {
  display: flex;
  flex: 1;
  flex-direction: column;
  align-items: center;
  justify-content: center;
  gap: 2px;
}
.scroller button + button { border-top: 1px solid #c6c6c6; }
.scroller .off { background: #e6e6e6; }
.scroller .caret { border-left-width: 3px; border-right-width: 3px; }
.more-line {
  width: 7px;
  height: 1px;
  background: #6a6a6a;
}
.ins { width: 50px; margin-left: 4px; }
.del { width: 50px; }
.fmt { width: 52px; }
.sort { width: 46px; }
.find { width: 58px; }
.collapse {
  align-self: flex-end;
  margin-left: auto;
  padding: 6px 10px;
}

/* formula bar */
.formula-bar {
  display: flex;
  flex: none;
  padding: 12px 6px;
}
.box {
  display: flex;
  align-items: center;
  height: 30px;
  border: 1px solid #c6c6c6;
  background: #fdfdfd;
}
.name-box {
  width: 127px;
  padding: 0 8px 0 6px;
}
.name-box input {
  flex: 1;
  min-width: 0;
}
.grip {
  display: flex;
  flex-direction: column;
  align-items: center;
  justify-content: center;
  gap: 2px;
  width: 37px;
}
.grip i {
  width: 3px;
  height: 3px;
  background: #b0b0b0;
}
.fx {
  width: 137px;
  margin-right: 3px;
}
.fx button {
  display: flex;
  flex: 1;
  justify-content: center;
}
.fx-btn {
  color: #666;
  font-family: 'Liberation Serif', serif;
  font-size: 20px;
  font-style: italic;
  font-weight: 700;
}
.formula {
  flex: 1;
  padding: 0 4px 0 13px;
}
.formula input {
  flex: 1;
  min-width: 0;
}

/* worksheet */
.sheet-area {
  display: flex;
  flex: 1;
  min-height: 0;
}
.grid {
  flex: 1;
  min-width: 0;
  overflow: hidden;
  border-right: 1px solid #999;
  border-bottom: 1px solid #999;
}
table {
  width: 100%;
  table-layout: fixed;
  border-collapse: separate;
  border-spacing: 0;
  background: #fff;
  color: #000;
  font-family: Lato, sans-serif;
  font-size: 16px;
}
.c-head { width: 35px; }
.c-a { width: 155px; }
.c-b { width: 212px; }
.c-c { width: 278px; }
.c-std { width: 80px; }
th,
td {
  height: 24px;
  padding: 0;
  border-right: 1px solid #d4d4d4;
  border-bottom: 1px solid #d4d4d4;
  line-height: 22px;
  white-space: nowrap;
}
th {
  background: #e6e6e6;
  font-family: 'Open Sans', sans-serif;
  font-weight: 400;
  text-align: center;
}
thead th {
  border-right-color: #b4b4b4;
  border-bottom-color: #999;
}
tbody th {
  border-right-color: #999;
  border-bottom-color: #b8b8b8;
}
th.picked {
  background: #d2d2d2;
  color: #217346;
}
thead th:last-child,
tbody td:last-child { border-right: 0; }
.corner svg { margin: 4px 3px 2px auto; }
td { padding: 0 3px; }
td.num { text-align: right; }
td.active {
  position: relative;
}
td.active::before {
  position: absolute;
  inset: -2px;
  border: 2px solid #217346;
  content: '';
}
td.active::after {
  position: absolute;
  right: -3px;
  bottom: -3px;
  width: 6px;
  height: 6px;
  border: solid #fff;
  border-width: 1px 0 0 1px;
  background: #217346;
  content: '';
}
.vscroll {
  display: flex;
  flex-direction: column;
  width: 19px;
  margin: 2px 3px 0 4px;
}
.vscroll button,
.hscroll button {
  display: flex;
  align-items: center;
  justify-content: center;
  border: 1px solid #c6c6c6;
  background: #fff;
}
.vscroll button { height: 19px; }
.track {
  flex: 1;
  background: #dadada;
}
.thumb {
  border: 1px solid #ababab;
  background: #fff;
}
.vscroll .thumb {
  width: 100%;
  height: calc(100% - 25px);
}

/* sheet tabs */
.sheet-bar {
  display: flex;
  flex: none;
  height: 28px;
}
.sheet-nav {
  display: flex;
  align-items: center;
  width: 103px;
  padding-left: 16px;
}
.sheet-nav button {
  display: flex;
  justify-content: center;
  width: 29px;
}
.sheet-tab {
  width: 100px;
  height: 26px;
  margin-top: -1px;
  border: solid #999;
  border-width: 0 1px 2px;
  border-bottom-color: #217346;
  background: #fff;
  color: #217346;
  font-size: 16px;
  font-weight: 700;
}
.add {
  margin: 0 auto 0 32px;
}
.hscroll {
  display: flex;
  width: 38%;
  height: 19px;
  margin: 4px 25px 0 0;
}
.hscroll button { width: 19px; }
.hscroll .thumb {
  width: calc(100% - 39px);
  height: 100%;
}
.status {
  display: flex;
  flex: none;
  justify-content: flex-end;
  height: 3px;
  padding-right: 297px;
  border-top: 1px solid #bcbcbc;
  background: #f1f1f1;
}
.status span {
  width: 41px;
  background: #c6c6c6;
}
</style>
